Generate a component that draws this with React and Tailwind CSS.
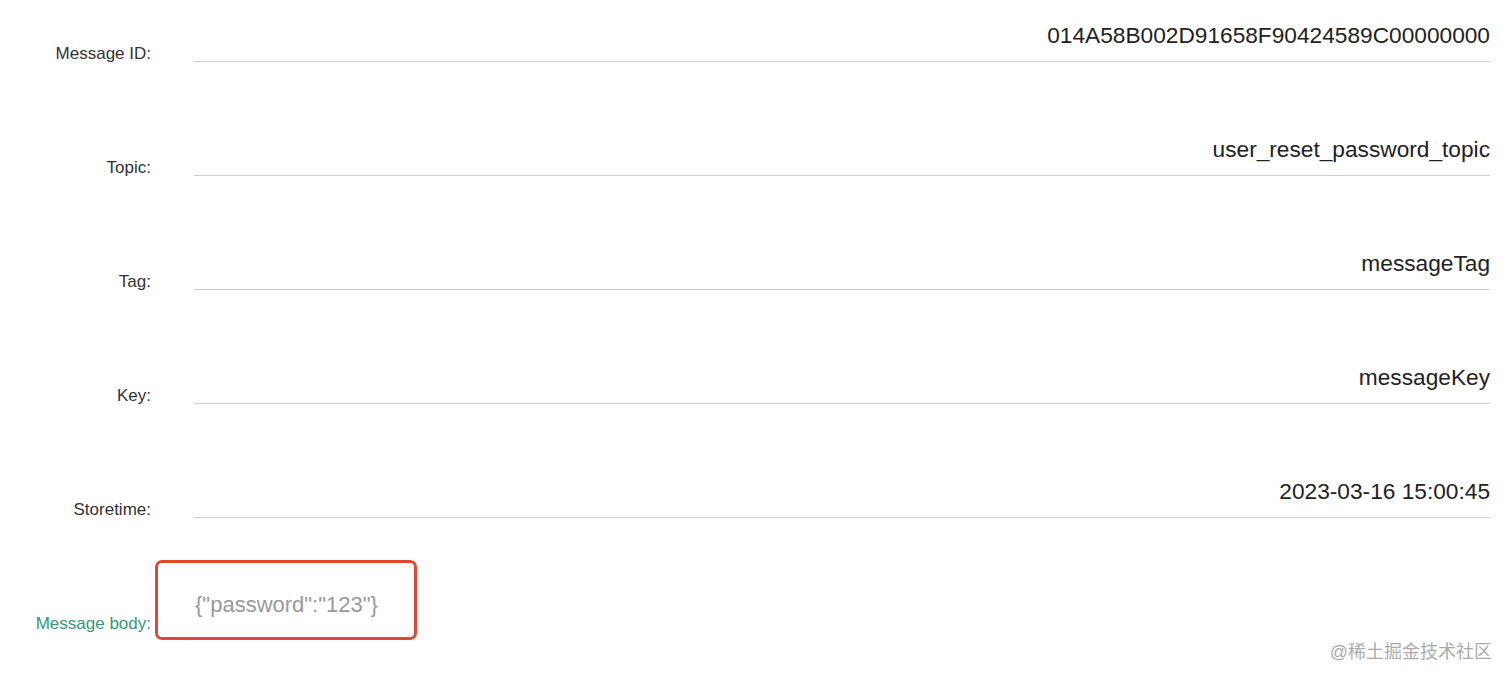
import React from "react";

const rows = [
  { label: "Message ID:", value: "014A58B002D91658F90424589C00000000" },
  { label: "Topic:", value: "user_reset_password_topic" },
  { label: "Tag:", value: "messageTag" },
  { label: "Key:", value: "messageKey" },
  { label: "Storetime:", value: "2023-03-16 15:00:45" },
];

function Row({ label, value, first }) {
  return (
    <div className={`flex items-end ${first ? "" : "mt-[73px]"}`}>
      <div className="w-[151px] shrink-0 text-right text-[17px] leading-[17px] text-[#333]">
        {label}
      </div>
      <div className="ml-[43px] flex-1 border-b border-[#cfcfcf] pb-[12px] text-right text-[22.7px] leading-[28px] text-[#222]">
        {value}
      </div>
    </div>
  );
}

export default function App() {
  return (
    <div
      className="relative h-[683px] w-full overflow-hidden bg-white pr-[22px] pt-[21px]"
      style={{ fontFamily: '"Liberation Sans", Arial, "Noto Sans CJK SC", sans-serif' }}
    >
      {rows.map((r, i) => (
        <Row key={r.label} label={r.label} value={r.value} first={i === 0} />
      ))}

      <div className="mt-[42px] flex items-end">
        <div className="mb-[8px] w-[151px] shrink-0 text-right text-[17px] leading-[17px] text-[#35977a]">
          Message body:
        </div>
        <div className="ml-[4px] h-[80px] w-[262px] rounded-[7px] border-[3px] border-[#e2472f] pl-[37px] pt-[29px] text-[22px] leading-[26px] text-[#999]">
          {'{"password":"123"}'}
        </div>
      </div>

      <div className="absolute bottom-[20px] right-[20px] text-[18px] leading-[22px] text-[#ababab]">
        @稀土掘金技术社区
      </div>
    </div>
  );
}
